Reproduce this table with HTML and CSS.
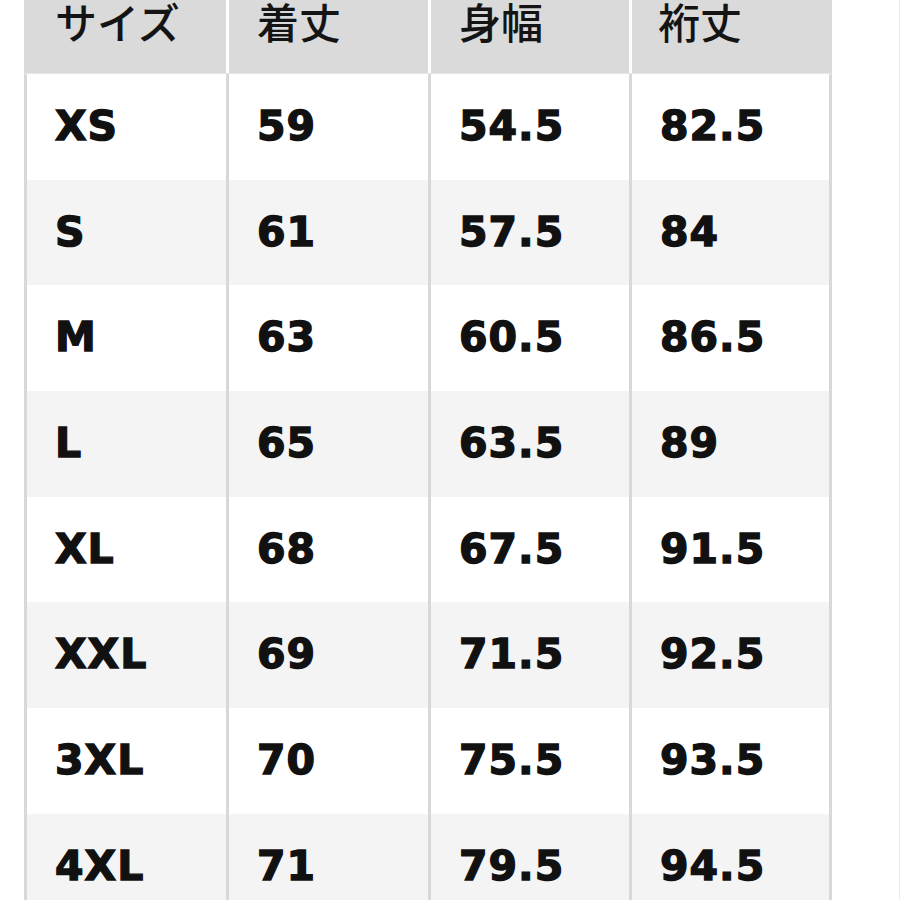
FILE: index.html
```html
<!DOCTYPE html>
<html lang="ja">
<head>
<meta charset="utf-8">
<title>サイズ表</title>
<link rel="stylesheet" href="styles.css">
</head>
<body>
<div class="page">
  <div class="chart">
    <div class="head">
      <div class="hcell">サイズ</div>
      <div class="hcell">着丈</div>
      <div class="hcell">身幅</div>
      <div class="hcell">裄丈</div>
    </div>
    <div class="row"><div class="cell">XS</div><div class="cell">59</div><div class="cell">54.5</div><div class="cell">82.5</div></div>
    <div class="row alt"><div class="cell">S</div><div class="cell">61</div><div class="cell">57.5</div><div class="cell">84</div></div>
    <div class="row"><div class="cell">M</div><div class="cell">63</div><div class="cell">60.5</div><div class="cell">86.5</div></div>
    <div class="row alt"><div class="cell">L</div><div class="cell">65</div><div class="cell">63.5</div><div class="cell">89</div></div>
    <div class="row"><div class="cell">XL</div><div class="cell">68</div><div class="cell">67.5</div><div class="cell">91.5</div></div>
    <div class="row alt"><div class="cell">XXL</div><div class="cell">69</div><div class="cell">71.5</div><div class="cell">92.5</div></div>
    <div class="row"><div class="cell">3XL</div><div class="cell">70</div><div class="cell">75.5</div><div class="cell">93.5</div></div>
    <div class="row alt"><div class="cell">4XL</div><div class="cell">71</div><div class="cell">79.5</div><div class="cell">94.5</div></div>
  </div>
</div>
</body>
</html>
```

FILE: styles.css
```css
html, body {
  margin: 0;
  padding: 0;
  background: #ffffff;
}
.page {
  width: 875px;
  height: 900px;
  overflow: hidden;
  border-right: 1px solid #ececec;
  padding-left: 24px;
}
.chart {
  width: 808px;
  display: flex;
  flex-direction: column;
}
.head {
  display: grid;
  grid-template-columns: 202px 199px 198px 200px;
  column-gap: 3px;
  height: 74px;
  background: #ffffff;
  border-bottom: 1px solid #e6e6e6;
  box-sizing: border-box;
}
.hcell {
  background: #dadada;
  font-family: "Noto Sans CJK JP", "Noto Sans", sans-serif;
  font-weight: 500;
  font-size: 42px;
  line-height: 42px;
  color: #141414;
  padding-left: 28px;
}
.hcell:first-child {
  padding-left: 31px;
}
.hcell:last-child {
  padding-left: 26px;
}
.row {
  display: grid;
  grid-template-columns: 199px 199px 198px 197px;
  column-gap: 3px;
  padding: 0 3px;
  background: #d8d8d8;
  height: 105.7px;
}
.cell {
  background: #ffffff;
  display: flex;
  align-items: center;
  padding-left: 28px;
  padding-bottom: 2px;
  font-family: "DejaVu Sans", "Liberation Sans", sans-serif;
  font-weight: bold;
  font-size: 41px;
  letter-spacing: 1px;
  -webkit-text-stroke: 1.4px #111111;
  color: #111111;
}
.row.alt .cell {
  background: #f4f4f4;
}
```
